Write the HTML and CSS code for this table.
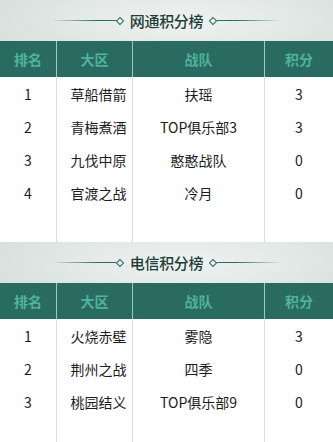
FILE: index.html
```html
<!DOCTYPE html>
<html lang="zh">
<head>
<meta charset="utf-8">
<link rel="stylesheet" href="styles.css">
</head>
<body>
<section class="board">
  <div class="title"><span class="deco left"></span><span class="dot"></span><h2>网通积分榜</h2><span class="dot"></span><span class="deco right"></span></div>
  <div class="row head"><div>排名</div><div>大区</div><div>战队</div><div>积分</div></div>
  <div class="row"><div>1</div><div class="area">草船借箭</div><div>扶瑶</div><div>3</div></div>
  <div class="row"><div>2</div><div class="area">青梅煮酒</div><div>TOP俱乐部3</div><div>3</div></div>
  <div class="row"><div>3</div><div class="area">九伐中原</div><div>憨憨战队</div><div>0</div></div>
  <div class="row"><div>4</div><div class="area">官渡之战</div><div>冷月</div><div>0</div></div>
  <div class="row"><div></div><div class="area"></div><div></div><div></div></div>
</section>
<section class="board last">
  <div class="title"><span class="deco left"></span><span class="dot"></span><h2>电信积分榜</h2><span class="dot"></span><span class="deco right"></span></div>
  <div class="row head"><div>排名</div><div>大区</div><div>战队</div><div>积分</div></div>
  <div class="row"><div>1</div><div class="area">火烧赤壁</div><div>雾隐</div><div>3</div></div>
  <div class="row"><div>2</div><div class="area">荆州之战</div><div>四季</div><div>0</div></div>
  <div class="row"><div>3</div><div class="area">桃园结义</div><div>TOP俱乐部9</div><div>0</div></div>
  <div class="row short"><div></div><div class="area"></div><div></div><div></div></div>
</section>
</body>
</html>
```
FILE: styles.css
```css
html, body { margin: 0; padding: 0; background: #fff; }
body {
  width: 333px;
  font-family: "Noto Sans CJK SC", "Noto Sans", sans-serif;
  font-size: 14px;
  color: #1c1c1c;
}
.title {
  height: 41px;
  display: flex;
  align-items: center;
  justify-content: center;
  background: radial-gradient(ellipse 60% 120% at 55% 50%, #eef2f1 0%, #e4eae8 50%, #d6e0dd 100%);
}
.title h2 {
  margin: 0 7px;
  font-size: 15px;
  font-weight: 500;
  color: #1f3d38;
  line-height: 20px;
  letter-spacing: -0.3px;
}
.deco { display: block; height: 1px; width: 66px; }
.deco.left { background: linear-gradient(to right, rgba(42,107,96,0), #2a6b60 70%); }
.deco.right { background: linear-gradient(to left, rgba(42,107,96,0), #2a6b60 70%); }
.dot {
  display: block;
  width: 4px;
  height: 4px;
  border: 1.5px solid #2a6b60;
  transform: rotate(45deg);
  background: #e9efed;
}
.row {
  display: grid;
  grid-template-columns: 56px 76px 132px 69px;
  height: 33px;
}
.row.short { height: 24px; }
.row > div {
  display: flex;
  align-items: center;
  justify-content: center;
  box-sizing: border-box;
  line-height: 1;
}
.row > div + div { border-left: 1px solid #dcdcdc; }
.row > .area { padding-left: 8px; }
.row.head {
  height: 36px;
  background: #296b60;
}
.row.head > div {
  color: #50b39a;
  font-weight: 700;
  font-size: 14px;
  padding-left: 0;
}
.row.head > div + div { border-left-color: #a9c4be; }
.row.head > .area { padding-right: 4px; }
```
